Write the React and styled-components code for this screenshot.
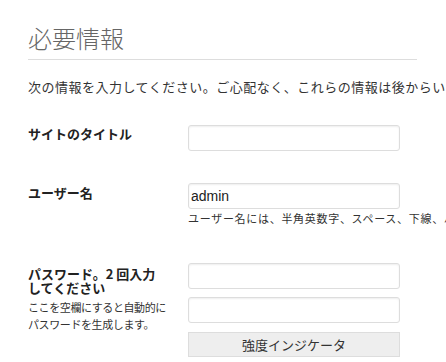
import styled, { createGlobalStyle } from 'styled-components';

const GlobalStyle = createGlobalStyle`
  body {
    margin: 0;
    background: #fff;
    overflow: hidden;
    font-family: "Noto Sans CJK JP", "Liberation Sans", sans-serif;
    color: #333;
  }
`;

const Page = styled.div`
  padding-left: 28px;
  width: 389px;
`;

const Title = styled.h1`
  margin: 23px 0 0;
  padding-bottom: 6px;
  border-bottom: 1px solid #dddddd;
  font-size: 24px;
  line-height: 30px;
  font-weight: 300;
  color: #666;
`;

const Intro = styled.p`
  margin: 17px 0 0;
  font-size: 13px;
  line-height: 20px;
  letter-spacing: 0.5px;
  white-space: nowrap;
`;

const Row = styled.div`
  display: grid;
  grid-template-columns: 160px 212px;
  margin-top: ${({ $top }) => $top}px;
`;

const Label = styled.div`
  padding-top: ${({ $pt }) => $pt}px;
  font-size: 13px;
  line-height: 14px;
  font-weight: bold;
  color: #222;
  white-space: nowrap;
`;

const SideNote = styled.div`
  margin-top: 4px;
  font-size: 11px;
  line-height: 17px;
  letter-spacing: -0.4px;
  white-space: nowrap;
`;

const Field = styled.div`
  display: flex;
  flex-direction: column;
`;

const Input = styled.input`
  box-sizing: border-box;
  width: 212px;
  height: 26px;
  margin: ${({ $mt }) => $mt || 0}px 0 0;
  padding: 0 2px;
  border: 1px solid #ddd;
  border-radius: 3px;
  box-shadow: inset 0 1px 2px rgba(0, 0, 0, 0.07);
  font-family: "Liberation Sans", Arial, sans-serif;
  font-size: 14px;
  color: #222;
  outline: none;
`;

const Hint = styled.div`
  margin-top: 2px;
  font-size: 11px;
  line-height: 14px;
  letter-spacing: 0.7px;
  white-space: nowrap;
`;

const Strength = styled.div`
  box-sizing: border-box;
  width: 212px;
  height: 25px;
  margin-top: 9px;
  border: 1px solid #ddd;
  background: #eee;
  font-size: 13px;
  line-height: 23px;
  text-align: center;
  color: #333;
`;

export default function App() {
  return (
    <>
      <GlobalStyle />
      <Page>
        <Title>必要情報</Title>
        <Intro>次の情報を入力してください。ご心配なく、これらの情報は後からいつでも変更できます。</Intro>

        <Row $top={28}>
          <Label $pt={2}>サイトのタイトル</Label>
          <Field>
            <Input type="text" />
          </Field>
        </Row>

        <Row $top={32}>
          <Label $pt={3}>ユーザー名</Label>
          <Field>
            <Input type="text" defaultValue="admin" />
            <Hint>ユーザー名には、半角英数字、スペース、下線、ハイフン、ピリオド、アットマーク (@) のみが使用できます。</Hint>
          </Field>
        </Row>

        <Row $top={38}>
          <div>
            <Label $pt={4}>
              パスワード。2 回入力
              <br />
              してください
            </Label>
            <SideNote>
              ここを空欄にすると自動的に
              <br />
              パスワードを生成します。
            </SideNote>
          </div>
          <Field>
            <Input type="password" />
            <Input type="password" $mt={8} />
            <Strength>強度インジケータ</Strength>
          </Field>
        </Row>
      </Page>
    </>
  );
}
